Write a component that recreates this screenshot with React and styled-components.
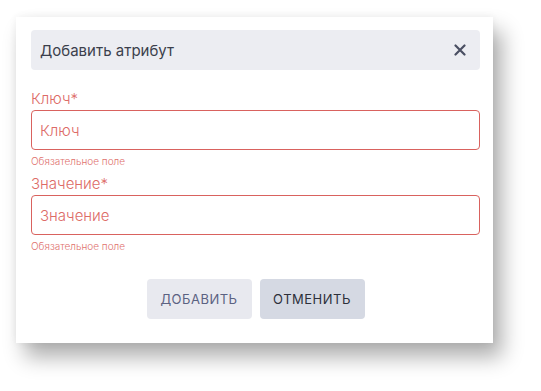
import React from 'react'
import styled, { createGlobalStyle } from 'styled-components'

const GlobalStyle = createGlobalStyle`
  body {
    margin: 0;
    background: #ffffff;
    font-family: Inter, "Noto Sans", sans-serif;
  }
`;

const Page = styled.div`
  padding: 17px 0 0 16px;
  min-height: 100vh;
  box-sizing: border-box;
`;

const Card = styled.div`
  width: 477px;
  height: 326px;
  box-sizing: border-box;
  background: #fff;
  padding: 13px 13px 0 15px;
  box-shadow: 9px 14px 20px rgba(0, 0, 0, 0.32), 0 0 8px rgba(0, 0, 0, 0.06);
  display: flex;
  flex-direction: column;
`;

const Header = styled.div`
  height: 40px;
  border-radius: 4px;
  background: #ecedf2;
  display: flex;
  align-items: center;
  justify-content: space-between;
  padding: 0 14px 0 9px;
  color: #3b3f4c;
  font-size: 15px;
`;

const Close = styled.button`
  border: 0;
  background: none;
  padding: 0;
  display: flex;
  cursor: pointer;
`;

const Label = styled.div`
  margin-top: ${p => p.$first ? '20px' : '8px'};
  height: 20px;
  line-height: 18px;
  font-size: 15px;
  font-weight: 300;
  color: #dd6b67;
`;

const Input = styled.input`
  box-sizing: border-box;
  width: 100%;
  height: 40px;
  border: 1px solid #d9625e;
  border-radius: 4px;
  padding: 0 8px;
  font: inherit;
  font-size: 15px;
  font-weight: 300;
  outline: none;
  &::placeholder { color: #dd6b67; }
`;

const Helper = styled.div`
  margin-top: 5px;
  font-size: 10px;
  line-height: 12px;
  font-weight: 300;
  color: #e0716d;
`;

const Actions = styled.div`
  margin-top: 27px;
  display: flex;
  justify-content: center;
  gap: 8px;
`;

const Button = styled.button`
  width: 105px;
  height: 40px;
  border: 0;
  border-radius: 4px;
  font-family: inherit;
  font-size: 13px;
  font-weight: 400;
  letter-spacing: 0.5px;
  background: ${p => p.$secondary ? '#d5d9e3' : '#e8e9ef'};
  color: ${p => p.$secondary ? '#2d303b' : '#5b6282'};
  cursor: pointer;
`;

export default function App() {
  return (
    <Page>
      <GlobalStyle />
      <Card>
        <Header>
          Добавить атрибут
          <Close>
            <svg width="12" height="12" viewBox="0 0 12 12">
              <path d="M1.5 1.5l9 9M10.5 1.5l-9 9" stroke="#4a4f63" strokeWidth="2.2" strokeLinecap="round" />
            </svg>
          </Close>
        </Header>
        <Label $first>Ключ*</Label>
        <Input placeholder="Ключ" />
        <Helper>Обязательное поле</Helper>
        <Label>Значение*</Label>
        <Input placeholder="Значение" />
        <Helper>Обязательное поле</Helper>
        <Actions>
          <Button>ДОБАВИТЬ</Button>
          <Button $secondary>ОТМЕНИТЬ</Button>
        </Actions>
      </Card>
    </Page>
  )
}
